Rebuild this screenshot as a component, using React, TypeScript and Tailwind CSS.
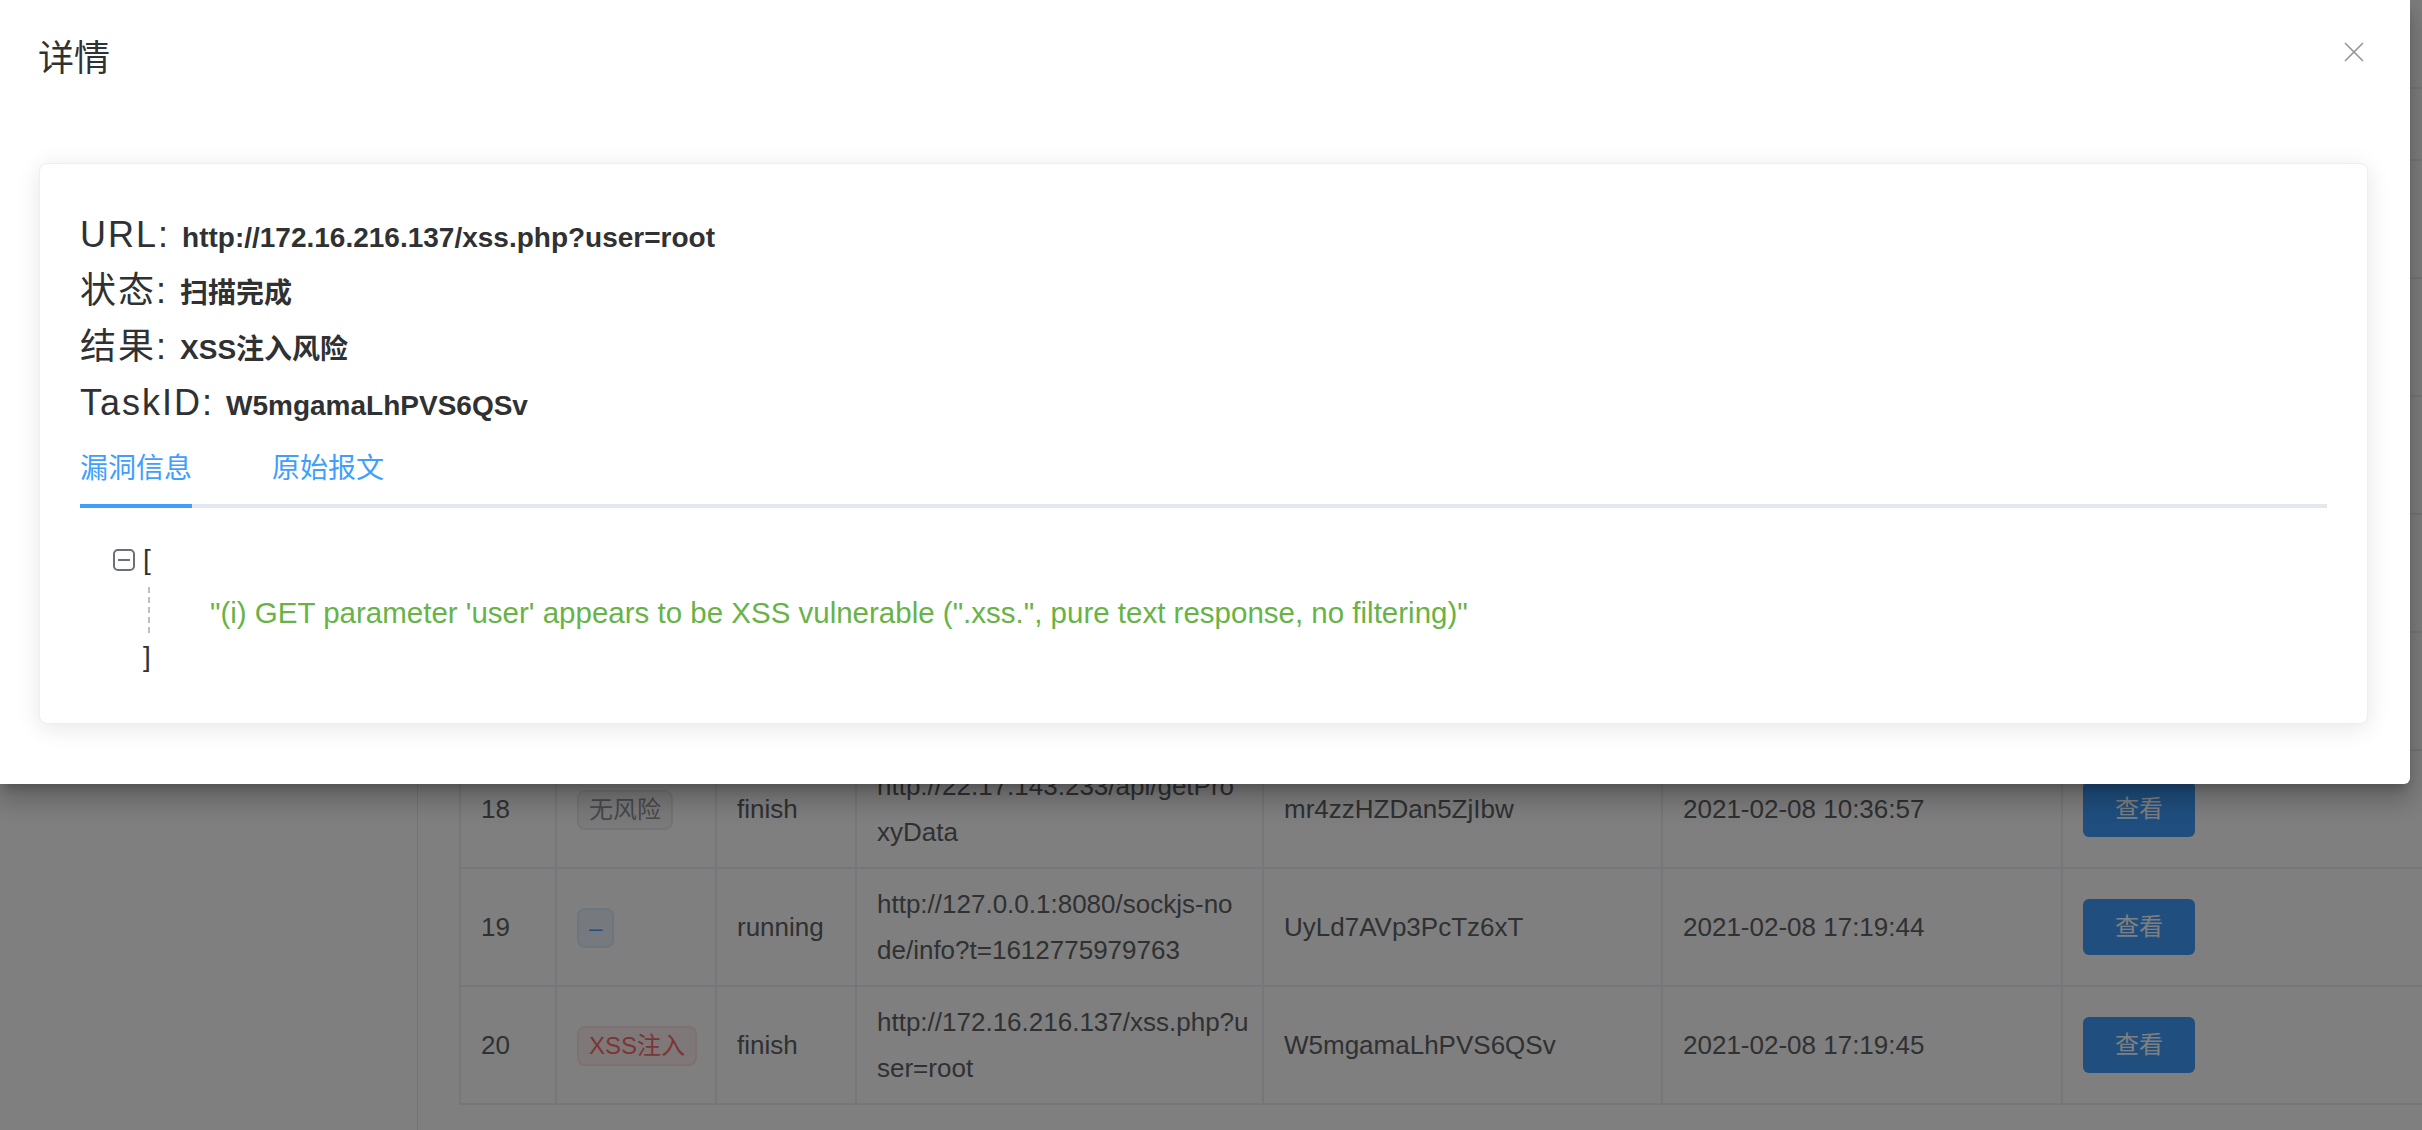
type Risk = 'none' | 'pending' | 'xss'

const tasks: { id: number; risk: Risk; status: string; url: string[]; taskId: string; time: string }[] = [
    { id: 13, risk: 'none', status: 'finish', url: ['http://172.16.216.137/index.p', 'hp?id=1'], taskId: 'aK3nPq8RtZ2mLwXc', time: '2021-02-07 15:12:08' },
    { id: 14, risk: 'none', status: 'finish', url: ['http://172.16.216.137/login.p', 'hp'], taskId: 'Bv7YhT2dQe9sFjNu', time: '2021-02-07 15:20:31' },
    { id: 15, risk: 'none', status: 'finish', url: ['http://22.17.143.233/api/getUs', 'erInfo'], taskId: 'Qx5WcR1kLm8HgTzp', time: '2021-02-08 09:41:12' },
    { id: 16, risk: 'none', status: 'finish', url: ['http://22.17.143.233/api/getLis', 't?page=1'], taskId: 'Ht2JvN6bXs4PfKdy', time: '2021-02-08 10:02:45' },
    { id: 17, risk: 'none', status: 'finish', url: ['http://22.17.143.233/api/getCo', 'nfig'], taskId: 'Zp9LmE3aWq7RtUcb', time: '2021-02-08 10:30:19' },
    { id: 18, risk: 'none', status: 'finish', url: ['http://22.17.143.233/api/getPro', 'xyData'], taskId: 'mr4zzHZDan5ZjIbw', time: '2021-02-08 10:36:57' },
    { id: 19, risk: 'pending', status: 'running', url: ['http://127.0.0.1:8080/sockjs-no', 'de/info?t=1612775979763'], taskId: 'UyLd7AVp3PcTz6xT', time: '2021-02-08 17:19:44' },
    { id: 20, risk: 'xss', status: 'finish', url: ['http://172.16.216.137/xss.php?u', 'ser=root'], taskId: 'W5mgamaLhPVS6QSv', time: '2021-02-08 17:19:45' }
]

function RiskTag({ risk }: { risk: Risk }) {
    if (risk === 'xss') {
        return (
            <span className="inline-flex h-[40px] items-center whitespace-nowrap rounded-[8px] border-2 border-[#fde2e2] bg-[#fef0f0] px-[10px] text-[24px] text-[#f56c6c]">
                XSS注入
            </span>
        )
    }
    if (risk === 'pending') {
        return (
            <span className="inline-flex h-[40px] items-center whitespace-nowrap rounded-[8px] border-2 border-[#d9ecff] bg-[#ecf5ff] px-[10px] text-[24px] text-[#409eff]">
                –
            </span>
        )
    }
    return (
        <span className="inline-flex h-[40px] items-center whitespace-nowrap rounded-[8px] border-2 border-[#e9e9eb] bg-[#f4f4f5] px-[10px] text-[24px] text-[#909399]">
            无风险
        </span>
    )
}

function TaskTable() {
    const cell = 'border-2 border-[#ebeef5] px-[20px] align-middle'
    return (
        <table className="w-[2002px] table-fixed border-collapse text-[26px] leading-[46px] text-[#606266]">
            <colgroup>
                <col className="w-[96px]" />
                <col className="w-[160px]" />
                <col className="w-[140px]" />
                <col className="w-[407px]" />
                <col className="w-[399px]" />
                <col className="w-[400px]" />
                <col className="w-[400px]" />
            </colgroup>
            <thead>
                <tr className="h-[72px] text-left font-bold text-[#909399]">
                    <th className={cell}>序号</th>
                    <th className={cell}>结果</th>
                    <th className={cell}>状态</th>
                    <th className={cell}>URL</th>
                    <th className={cell}>TaskID</th>
                    <th className={cell}>创建时间</th>
                    <th className={cell}>操作</th>
                </tr>
            </thead>
            <tbody>
                {tasks.map((task) => (
                    <tr key={task.id} className="h-[118px]">
                        <td className={cell}>{task.id}</td>
                        <td className={cell}>
                            <RiskTag risk={task.risk} />
                        </td>
                        <td className={cell}>{task.status}</td>
                        <td className={cell}>
                            {task.url.map((line) => (
                                <div key={line} className="whitespace-nowrap">{line}</div>
                            ))}
                        </td>
                        <td className={cell}>{task.taskId}</td>
                        <td className={cell}>{task.time}</td>
                        <td className={cell}>
                            <button className="flex h-[56px] w-[112px] items-center justify-center rounded-[6px] bg-[#409eff] text-[24px] text-white">
                                查看
                            </button>
                        </td>
                    </tr>
                ))}
            </tbody>
        </table>
    )
}

function InfoLine({ label, value, last }: { label: string; value: string; last?: boolean }) {
    return (
        <div className={`${last ? 'h-[53px]' : 'h-[56px]'} whitespace-nowrap leading-[56px] text-[#303133]`}>
            <span className="text-[36px] tracking-[2px]">{label}: </span>
            <span className="text-[28px] font-bold">{value}</span>
        </div>
    )
}

function DetailDrawer() {
    return (
        <div className="absolute left-0 top-0 h-[784px] w-[2410px] rounded-br-[6px] bg-white shadow-[0_8px_10px_-5px_rgba(0,0,0,0.2),0_16px_24px_2px_rgba(0,0,0,0.14),0_6px_30px_5px_rgba(0,0,0,0.12)]">
            {/* Header */}
            <div className="flex items-start justify-between pl-[38px] pr-[46px] pt-[39px]">
                <h2 className="text-[36px] leading-[40px] text-[#303133]">详情</h2>
                <button className="mt-[3px] text-[#909399]">
                    <svg width="20" height="20" viewBox="0 0 20 20" fill="none" stroke="currentColor" strokeWidth="1.6">
                        <path d="M1 1L19 19M19 1L1 19" />
                    </svg>
                </button>
            </div>

            {/* Body */}
            <div className="pl-[39px] pr-[42px] pt-[84px]">
                <div className="rounded-[8px] border border-[#ebeef5] bg-white px-[40px] pb-[43px] pt-[43px] shadow-[0_4px_24px_rgba(0,0,0,0.1)]">
                    <InfoLine label="URL" value="http://172.16.216.137/xss.php?user=root" />
                    <InfoLine label="状态" value="扫描完成" />
                    <InfoLine label="结果" value="XSS注入风险" />
                    <InfoLine label="TaskID" value="W5mgamaLhPVS6QSv" last />

                    {/* Tabs */}
                    <div className="flex gap-[80px] border-b-4 border-[#e4e7ed] text-[28px] text-[#409eff]">
                        <div className="-mb-[4px] flex h-[80px] items-center border-b-4 border-[#409eff] pt-[6px]">漏洞信息</div>
                        <div className="-mb-[4px] flex h-[80px] items-center border-b-4 border-transparent pt-[6px]">原始报文</div>
                    </div>

                    {/* JSON viewer */}
                    <div className="mt-[30px] pl-[33px] text-[28px] text-[#303133]">
                        <div className="flex h-[44px] items-center">
                            <span className="flex h-[22px] w-[22px] items-center justify-center rounded-[5px] border-2 border-[#6e7079]">
                                <span className="h-[2px] w-[12px] bg-[#6e7079]" />
                            </span>
                            <span className="ml-[8px]">[</span>
                        </div>
                        <div className="mb-[1px] ml-[35px] mt-[5px] flex h-[46px] items-center whitespace-nowrap border-l-2 border-dashed border-[#bfbfbf] pl-[60px] pt-[6px] text-[29.5px] text-[#67b346]">
                            "(i) GET parameter 'user' appears to be XSS vulnerable (".xss.", pure text response, no filtering)"
                        </div>
                        <div className="flex h-[46px] items-center pl-[30px]">]</div>
                    </div>
                </div>
            </div>
        </div>
    )
}

export default function App() {
    return (
        <div className="relative h-[1130px] w-[2422px] overflow-hidden bg-white font-['Liberation_Sans','Noto_Sans_CJK_SC',sans-serif]">
            {/* Page behind the drawer */}
            <div className="flex h-full">
                <aside className="w-[418px] shrink-0 border-r border-[#e6e6e6] bg-white" />
                <main className="min-w-0 flex-1 overflow-hidden pl-[41px] pt-[87px]">
                    <TaskTable />
                </main>
            </div>

            {/* Overlay */}
            <div className="absolute inset-0 bg-black/50" />

            <DetailDrawer />
        </div>
    )
}
